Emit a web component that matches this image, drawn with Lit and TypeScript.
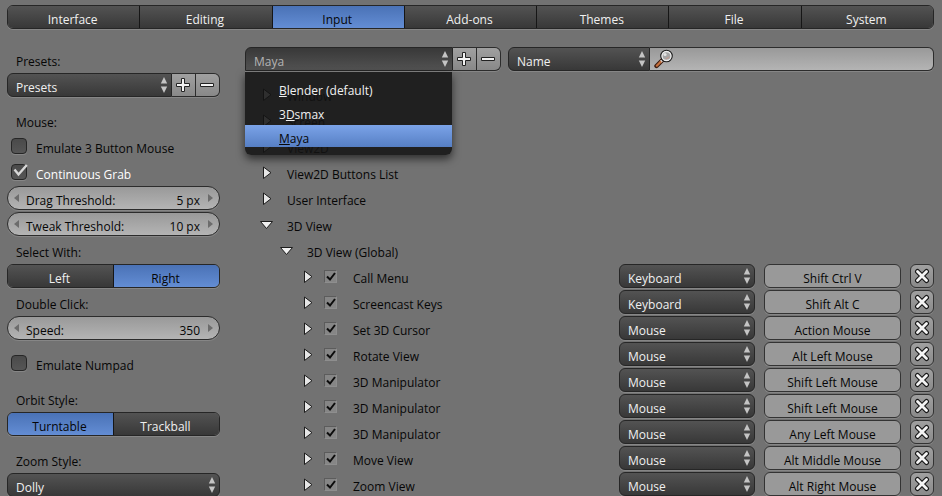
import { LitElement, html, svg, css, nothing } from "lit";
import { customElement, state } from "lit/decorators.js";
import { classMap } from "lit/directives/class-map.js";

type Binding = { name: string; device: string; key: string };

const TABS = ["Interface", "Editing", "Input", "Add-ons", "Themes", "File", "System"];
const DEVICES = ["Keyboard", "Mouse"];
const BINDINGS: Binding[] = [
  { name: "Call Menu", device: "Keyboard", key: "Shift Ctrl V" },
  { name: "Screencast Keys", device: "Keyboard", key: "Shift Alt C" },
  { name: "Set 3D Cursor", device: "Mouse", key: "Action Mouse" },
  { name: "Rotate View", device: "Mouse", key: "Alt Left Mouse" },
  { name: "3D Manipulator", device: "Mouse", key: "Shift Left Mouse" },
  { name: "3D Manipulator", device: "Mouse", key: "Shift Left Mouse" },
  { name: "3D Manipulator", device: "Mouse", key: "Any Left Mouse" },
  { name: "Move View", device: "Mouse", key: "Alt Middle Mouse" },
  { name: "Zoom View", device: "Mouse", key: "Alt Right Mouse" },
];

const plusIcon = svg`<svg class="icon" viewBox="0 0 16 16" width="16" height="16">
  <path d="M6.5 1.5h3v5h5v3h-5v5h-3v-5h-5v-3h5z" fill="#f2f2f2" stroke="#222" /></svg>`;
const minusIcon = svg`<svg class="icon" viewBox="0 0 16 16" width="16" height="16">
  <path d="M1.500 6.500h13v3h-13z" fill="#f2f2f2" stroke="#222" /></svg>`;
const closeIcon = svg`<svg class="icon" viewBox="0 0 16 16" width="16" height="16">
  <path d="M3.500 3.500l9 9M12.500 3.500l-9 9" stroke="#161616" stroke-width="5" stroke-linecap="round" />
  <path d="M3.500 3.500l9 9M12.500 3.500l-9 9" stroke="#f4f4f4" stroke-width="2.800" stroke-linecap="round" /></svg>`;
const searchIcon = svg`<svg class="icon" viewBox="0 0 20 20" width="20" height="20">
  <path d="M8 11.500L2.500 17" stroke="#3c1c10" stroke-width="4.400" stroke-linecap="round" />
  <path d="M8 11.500L6.500 13" stroke="#e8e8e8" stroke-width="2.400" />
  <path d="M6.500 13L2.800 16.700" stroke="#c8703c" stroke-width="2.200" stroke-linecap="round" />
  <circle cx="12.500" cy="7" r="5.600" fill="#a6a6a6" stroke="#1c1c1c" stroke-width="1.400" />
  <circle cx="12.500" cy="7" r="4.500" fill="none" stroke="#ededed" stroke-width="1.300" />
  <circle cx="11" cy="5.500" r="1.600" fill="#e4e4e4" />
  <path d="M11 10a3.500 3.500 0 0 0 4.500-3z" fill="#c09a90" /></svg>`;
const arrowsIcon = svg`<svg class="arrows" viewBox="0 0 8 18" width="8" height="18">
  <path d="M4 1L7.200 7.500H.800zM4 17L7.200 10.500H.800z" fill="#c4c4c4" /></svg>`;

@customElement("app-root")
export class AppRoot extends LitElement {
  @state() private tab = "Input";
  @state() private menuOpen = true;
  @state() private config = "Maya";
  @state() private selectWith = "Right";
  @state() private orbit = "Turntable";

  static styles = css`
    :host {
      display: block;
      height: 100vh;
      overflow: auto;
      scrollbar-width: none;
      background: #727272;
      color: #060606;
      font: 12px/18px "Open Sans", sans-serif;
    }
    * { box-sizing: border-box; }
    button, input, select { font: inherit; color: inherit; margin: 0; min-width: 0; }
    button { padding: 0; border: 0; background: none; }
    svg { display: block; fill: none; }
    .page { padding: 5px 8px 0 7px; }
    .body {
      display: grid;
      grid-template-columns: 213fr 689fr;
      column-gap: 25px;
      margin-top: 18px;
    }
    .side, .main { display: flex; flex-direction: column; gap: 11px; min-width: 0; }
    .group { display: flex; flex-direction: column; gap: 2px; }
    .segments, .bar { display: flex; height: 24px; }
    .frame {
      border: 1px solid #262626;
      border-radius: 6px;
      box-shadow: 0 1px 0 #868686;
      overflow: hidden;
    }
    .segment {
      flex: 1 1 0;
      padding: 5px 2px 0 0;
      color: #f0f0f0;
      background: linear-gradient(#535353, #383838);
    }
    .segment:not(:last-child) { border-right: 1px solid #161616; }
    .segment.on { color: #060606; background: linear-gradient(#4a72b6, #638dd4); }
    .caption { height: 24px; padding: 6px 9px 0; }
    .check { display: flex; align-items: center; gap: 8px; height: 24px; padding-left: 4px; }
    .check label { padding-top: 6px; }
    .check.on { color: #fff; }
    .box { display: grid; width: 17px; height: 17px; }
    .box > * { grid-area: 1 / 1; }
    .box input {
      appearance: none;
      width: 16px;
      height: 16px;
      border: 1px solid #262626;
      border-radius: 4px;
      background: linear-gradient(#4a4a4a, #565656);
      box-shadow: 0 1px 0 #868686;
    }
    .box svg { pointer-events: none; visibility: hidden; }
    .box input:checked + svg { visibility: visible; }
    .number {
      display: flex;
      align-items: center;
      height: 24px;
      padding: 0 6px;
      border: 1px solid #2c2c2c;
      border-radius: 12px;
      background: linear-gradient(#999, #b4b4b4);
      box-shadow: 0 1px 0 #868686;
    }
    .number label { padding: 6px 0 0 7px; white-space: nowrap; }
    .number input {
      flex: 1;
      width: 0;
      height: 22px;
      padding: 4px 8px 0 0;
      border: 0;
      background: none;
      text-align: right;
      outline: 0;
    }
    .drop { display: grid; height: 24px; align-items: center; min-width: 0; }
    .drop > * { grid-area: 1 / 1; }
    .drop select {
      appearance: none;
      width: 100%;
      height: 24px;
      padding: 5px 20px 0 8px;
      border: 1px solid #262626;
      border-radius: 6px;
      color: #f0f0f0;
      background: linear-gradient(#535353, #383838);
      box-shadow: 0 1px 0 #868686;
    }
    .drop select.joined { border-radius: 6px 0 0 6px; }
    .drop select.open {
      border-radius: 6px 0 0 0;
      color: #b4b4b4;
      background: linear-gradient(#383838, #525252);
    }
    .arrows { justify-self: end; margin-right: 4px; pointer-events: none; }
    .tool {
      display: grid;
      place-items: center;
      flex: 0 0 24px;
      height: 24px;
      padding-right: 1px;
      border: 1px solid #2c2c2c;
      border-left: 0;
      background: linear-gradient(#a0a0a0, #888);
      box-shadow: 0 1px 0 #868686;
    }
    .tool.last { border-radius: 0 6px 6px 0; }
    .grow { flex: 1; }
    .header { display: grid; grid-template-columns: 256fr 426fr; column-gap: 7px; }
    .preset { position: relative; }
    .filter { display: grid; grid-template-columns: 1fr 2fr; }
    .search {
      display: flex;
      align-items: center;
      height: 24px;
      padding: 0 4px;
      border: 1px solid #2c2c2c;
      border-left: 0;
      border-radius: 0 6px 6px 0;
      background: linear-gradient(#999, #b4b4b4);
      box-shadow: 0 1px 0 #868686;
    }
    .search input { flex: 1; border: 0; background: none; outline: 0; }
    .menu {
      position: absolute;
      z-index: 2;
      top: 25px;
      left: 0;
      right: 49px;
      display: flex;
      flex-direction: column;
      gap: 2px;
      padding: 5px 0 8px;
      border-radius: 0 0 6px 6px;
      background: rgba(20, 20, 20, 0.87);
      box-shadow: 0 4px 8px rgba(0, 0, 0, 0.6);
    }
    .item { height: 22px; padding: 5px 34px 0; text-align: left; color: #f0f0f0; }
    .item.on { color: #060606; background: linear-gradient(#7ba3e8, #567fc4); }
    .row { display: flex; align-items: center; height: 24px; padding-left: 12px; }
    .row.nested { padding-left: 32px; }
    .name { padding: 6px 0 0 10px; white-space: nowrap; }
    .twist { flex: 0 0 20px; display: grid; place-items: center; height: 20px; }
    .binding {
      display: grid;
      grid-template-columns: 365fr 136fr 137fr 24px;
      column-gap: 9px;
      height: 24px;
    }
    .entry { display: flex; align-items: center; padding-left: 53px; }
    .entry label { padding: 6px 0 0 15px; white-space: nowrap; }
    .active { display: grid; width: 14px; height: 14px; margin: 2px 0 0 6px; }
    .active > * { grid-area: 1 / 1; }
    .active input {
      appearance: none;
      width: 13px;
      height: 13px;
      border: 1px solid #5c5c5c;
      border-right-color: #8e8e8e;
      border-bottom-color: #8e8e8e;
      background: #868686;
    }
    .active svg { pointer-events: none; visibility: hidden; }
    .active input:checked + svg { visibility: visible; }
    .key, .remove {
      height: 24px;
      border: 1px solid #333;
      border-radius: 6px;
      box-shadow: 0 1px 0 #868686;
    }
    .key { padding-top: 5px; background: #999; }
    .remove { display: grid; place-items: center; background: linear-gradient(#a0a0a0, #8a8a8a); }
  `;

  private segments(options: string[], value: string, pick: (v: string) => void, label: string) {
    return html`<div class="segments frame" role="group" aria-label=${label}>
      ${options.map((o) => html`<button class=${classMap({ segment: true, on: o === value })}
        aria-pressed=${o === value} @click=${() => pick(o)}>${o}</button>`)}
    </div>`;
  }

  private drop(options: string[], value: string, label: string, cls = "") {
    return html`<div class="drop grow">
      <select class=${cls} aria-label=${label}>
        ${options.map((o) => html`<option ?selected=${o === value}>${o}</option>`)}
      </select>${arrowsIcon}
    </div>`;
  }

  private tools() {
    return html`<button class="tool" aria-label="Add preset">${plusIcon}</button>
      <button class="tool last" aria-label="Remove preset">${minusIcon}</button>`;
  }

  private check(id: string, label: string, checked: boolean) {
    return html`<div class=${classMap({ check: true, on: checked })}>
      <span class="box"><input type="checkbox" id=${id} .checked=${checked} />
        <svg viewBox="0 0 17 17" width="17" height="17">
          <path d="M3.500 5.500l4 5L15.800 1" stroke="#d8d8d8" stroke-width="2.400" /></svg></span>
      <label for=${id}>${label}</label>
    </div>`;
  }

  private number(id: string, label: string, value: string) {
    return html`<div class="number">
      <button aria-label="Decrease"><svg viewBox="0 0 5 8" width="5" height="8"><path d="M5 0v8L0 4z" fill="#6c6c6c" /></svg></button>
      <label for=${id}>${label}</label>
      <input id=${id} .value=${value} />
      <button aria-label="Increase"><svg viewBox="0 0 5 8" width="5" height="8"><path d="M0 0v8l5-4z" fill="#6c6c6c" /></svg></button>
    </div>`;
  }

  private twist(open: boolean) {
    return html`<button class="twist" aria-label=${open ? "Collapse" : "Expand"} aria-expanded=${open}>
      <svg viewBox="0 0 16 16" width="16" height="16">
        ${open
          ? svg`<path d="M1.500 5.500h12L7.500 12.500z" fill="#f0f0f0" stroke="#1c1c1c" stroke-linejoin="round" />`
          : svg`<path d="M4.500 3v11.500l7.500-5.800z" fill="#e6e6e6" stroke="#1c1c1c" stroke-linejoin="round" />`}
      </svg></button>`;
  }

  private row(name: string, open = false, nested = false) {
    return html`<div class=${classMap({ row: true, nested })}>${this.twist(open)}<span class="name">${name}</span></div>`;
  }

  private menuItem(before: string, hot: string, after: string) {
    const value = before + hot + after;
    return html`<button role="menuitem" class=${classMap({ item: true, on: value === this.config })}
      @click=${() => { this.config = value; this.menuOpen = false; }}>${before}<u>${hot}</u>${after}</button>`;
  }

  render() {
    return html`<div class="page">
      ${this.segments(TABS, this.tab, (v) => (this.tab = v), "Sections")}
      <div class="body">
        <div class="side">
          <div class="group">
            <div class="caption">Presets:</div>
            <div class="bar">${this.drop(["Presets"], "Presets", "Presets", "joined")}${this.tools()}</div>
          </div>
          <div class="group">
            <div class="caption">Mouse:</div>
            ${this.check("three", "Emulate 3 Button Mouse", false)}
            ${this.check("grab", "Continuous Grab", true)}
            ${this.number("drag", "Drag Threshold:", "5 px")}
            ${this.number("tweak", "Tweak Threshold:", "10 px")}
            <div class="caption">Select With:</div>
            ${this.segments(["Left", "Right"], this.selectWith, (v) => (this.selectWith = v), "Select With")}
            <div class="caption">Double Click:</div>
            ${this.number("speed", "Speed:", "350")}
          </div>
          ${this.check("numpad", "Emulate Numpad", false)}
          <div class="group">
            <div class="caption">Orbit Style:</div>
            ${this.segments(["Turntable", "Trackball"], this.orbit, (v) => (this.orbit = v), "Orbit Style")}
          </div>
          <div class="group">
            <div class="caption">Zoom Style:</div>
            ${this.drop(["Dolly"], "Dolly", "Zoom Style")}
          </div>
        </div>
        <div class="main">
          <div class="header">
            <div class="bar preset">
              ${this.drop(["Blender (default)", "3Dsmax", "Maya"], this.config, "Key configuration", this.menuOpen ? "open" : "joined")}
              ${this.tools()}
              ${this.menuOpen
                ? html`<div class="menu" role="menu">
                    ${this.menuItem("", "B", "lender (default)")}
                    ${this.menuItem("3", "D", "smax")}
                    ${this.menuItem("", "M", "aya")}
                  </div>`
                : nothing}
            </div>
            <div class="filter">
              ${this.drop(["Name"], "Name", "Filter by", "joined")}
              <div class="search">${searchIcon}<input type="text" aria-label="Search" /></div>
            </div>
          </div>
          <div class="group">
            ${this.row("Window")}
            ${this.row("Screen")}
            ${this.row("View2D")}
            ${this.row("View2D Buttons List")}
            ${this.row("User Interface")}
            ${this.row("3D View", true)}
            ${this.row("3D View (Global)", true, true)}
            ${BINDINGS.map((b, i) => html`<div class="binding">
              <div class="entry">
                ${this.twist(false)}
                <span class="active"><input type="checkbox" id="bind-${i}" checked />
                  <svg viewBox="0 0 14 14" width="14" height="14">
                    <path d="M3 6.500l3 3L11 3" stroke="#0c0c0c" stroke-width="2" /></svg></span>
                <label for="bind-${i}">${b.name}</label>
              </div>
              ${this.drop(DEVICES, b.device, b.name + " device")}
              <button class="key">${b.key}</button>
              <button class="remove" aria-label="Remove">${closeIcon}</button>
            </div>`)}
          </div>
        </div>
      </div>
    </div>`;
  }
}
